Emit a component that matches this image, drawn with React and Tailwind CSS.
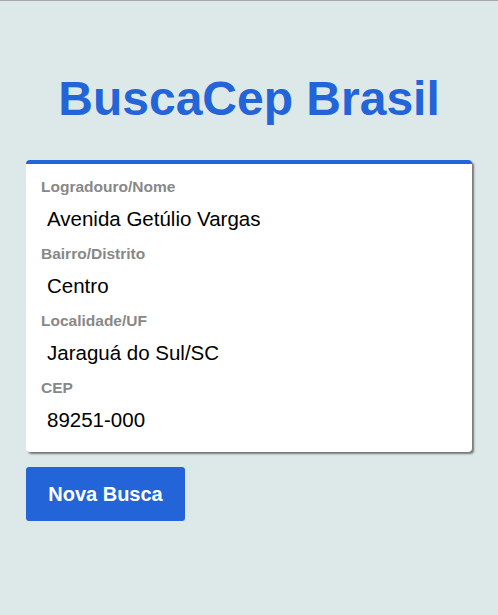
const FIELDS = [
  { label: "Logradouro/Nome", value: "Avenida Getúlio Vargas" },
  { label: "Bairro/Distrito", value: "Centro" },
  { label: "Localidade/UF", value: "Jaraguá do Sul/SC" },
  { label: "CEP", value: "89251-000" },
];

export default function App() {
  return (
    <div className="min-h-[615px] bg-[#dde9e9] border-t border-[#a9a9a9] font-['Liberation_Sans',Arial,sans-serif] px-[26px]">
      <h1 className="pt-[70px] text-center text-[48px] leading-[56px] font-bold text-[#2364d8]">
        BuscaCep Brasil
      </h1>

      <div className="mt-[33px] w-[446px] bg-white border-t-4 border-[#2364d8] rounded-[4px] shadow-[2px_2px_2px_#777] px-[15px] pt-[13px] pb-[19px]">
        {FIELDS.map((f, i) => (
          <div key={f.label} className={i > 0 ? "mt-[12px]" : ""}>
            <div className="text-[15.5px] leading-[20px] font-bold text-[#888]">{f.label}</div>
            <div className="mt-[9px] pl-[6px] text-[20.5px] leading-[26px] text-black">{f.value}</div>
          </div>
        ))}
      </div>

      <button className="mt-[15px] w-[159px] h-[54px] bg-[#2364d8] rounded-[3px] text-white font-bold text-[20px]">
        Nova Busca
      </button>
    </div>
  );
}
